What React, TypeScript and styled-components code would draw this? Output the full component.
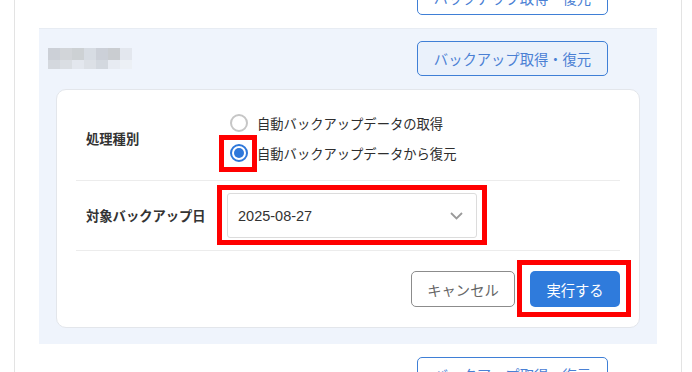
import React, { ReactElement } from 'react'
import styled, { createGlobalStyle } from 'styled-components'

const GlobalStyle = createGlobalStyle`
  html, body {
    margin: 0;
    padding: 0;
    overflow: hidden;
    background: #ffffff;
  }
  body {
    font-family: 'Liberation Sans', 'Noto Sans CJK JP', sans-serif;
    color: #333333;
    -webkit-font-smoothing: antialiased;
  }
`

const Panel = styled.div`
  margin: -33px 0 0 14px;
  width: 668px;
  box-sizing: border-box;
  border-left: 1px solid #e3e3e3;
  border-right: 1px solid #e3e3e3;
  padding: 0 24px;
  min-height: 420px;
`

const Item = styled.section<{ $active?: boolean }>`
  background: ${(p) => (p.$active ? '#eff4fc' : '#ffffff')};
  border-top: 1px solid ${(p) => (p.$active ? '#e7ecf3' : 'transparent')};
  padding: 12px 0 ${(p) => (p.$active ? '16px' : '13px')};
`

const ItemHeader = styled.div`
  display: flex;
  align-items: center;
  justify-content: space-between;
  padding: 0 49px 0 9px;
  height: 35px;
`

const Mosaic = styled.div`
  display: grid;
  grid-template-columns: repeat(7, 12px);
  grid-template-rows: 12px 9px;
`

const Cell = styled.span<{ $c: string }>`
  background: ${(p) => p.$c};
`

const OutlineButton = styled.button<{ $tinted?: boolean }>`
  margin-left: auto;
  width: 191px;
  height: 35px;
  box-sizing: border-box;
  border: 1px solid #3f7fd6;
  border-radius: 5px;
  background: ${(p) => (p.$tinted ? '#eaf1fb' : '#ffffff')};
  color: #4a80d4;
  font-family: 'Noto Sans CJK JP', sans-serif;
  font-size: 14.3px;
  padding: 0;
`

const Card = styled.div`
  margin: 13px 17px 0;
  background: #ffffff;
  border: 1px solid #e3e6eb;
  border-radius: 10px;
  padding: 0 19px;
`

const FormRow = styled.div<{ $pad: string }>`
  display: flex;
  align-items: center;
  padding: ${(p) => p.$pad};
  padding-left: 10px;
  border-bottom: 1px solid #ececec;
`

const Label = styled.div`
  width: 141px;
  flex: none;
  font-family: 'Noto Sans CJK JP', sans-serif;
  font-size: 13.3px;
  font-weight: 700;
  color: #333333;
`

const RadioList = styled.div`
  display: flex;
  flex-direction: column;
`

const RadioOption = styled.label`
  display: flex;
  align-items: center;
  height: 30px;
  gap: 9px;
  font-family: 'Noto Sans CJK JP', sans-serif;
  font-size: 13.3px;
  color: #2e2e2e;
`

const RadioMark = styled.span<{ $checked?: boolean }>`
  position: relative;
  margin-left: 3px;
  width: 18px;
  height: 18px;
  box-sizing: border-box;
  border-radius: 50%;
  border: 2px solid ${(p) => (p.$checked ? '#2f78da' : '#c6c6c6')};
  background: #ffffff;
  display: flex;
  align-items: center;
  justify-content: center;
  flex: none;

  &::after {
    content: '';
    display: ${(p) => (p.$checked ? 'block' : 'none')};
    width: 10px;
    height: 10px;
    border-radius: 50%;
    background: #2f78da;
  }
`

const Marker = styled.span<{ $inset: string }>`
  position: absolute;
  inset: ${(p) => p.$inset};
  border: 5px solid #ff0000;
  pointer-events: none;
`

const SelectBox = styled.div`
  position: relative;
  width: 250px;
  height: 45px;
  box-sizing: border-box;
  border: 1px solid #dcdcdc;
  border-radius: 3px;
  display: flex;
  align-items: center;
  justify-content: space-between;
  padding: 0 13px 0 10px;
  font-size: 14.5px;
  color: #333333;
`

const Footer = styled.div`
  display: flex;
  justify-content: flex-end;
  gap: 15px;
  padding: 20px 0 20px;
`

const CancelButton = styled.button`
  height: 36px;
  width: 104px;
  box-sizing: border-box;
  border: 1px solid #8c8c8c;
  border-radius: 5px;
  background: #ffffff;
  color: #666666;
  font-family: 'Noto Sans CJK JP', sans-serif;
  font-size: 14.3px;
  padding: 0;
`

const ButtonWrap = styled.div`
  position: relative;
  display: flex;
`

const PrimaryButton = styled.button`
  height: 36px;
  width: 90px;
  border: none;
  border-radius: 5px;
  background: #2f7bdc;
  color: #ffffff;
  font-family: 'Noto Sans CJK JP', sans-serif;
  font-size: 14.3px;
  padding: 0;
`

const mosaic = [
  '#ccd0d7', '#d2d5d9', '#cdd1d4', '#d7dce3', '#ccd0d8', '#cacdd1', '#e3e7ee',
  '#d4d8de', '#dadee3', '#e3e7ee', '#dce0e6', '#d3d8df', '#e7ebf2', '#ecf0f5',
]

const Chevron = (): ReactElement => (
  <svg width="13" height="8" viewBox="0 0 13 8">
    <path d="M1 1 L6.5 6.5 L12 1" fill="none" stroke="#9a9a9a" strokeWidth="1.8" />
  </svg>
)

const App = (): ReactElement => (
  <>
    <GlobalStyle />
    <Panel>
      <Item>
        <ItemHeader>
          <OutlineButton>バックアップ取得・復元</OutlineButton>
        </ItemHeader>
      </Item>
      <Item $active>
        <ItemHeader>
          <Mosaic>
            {mosaic.map((c, i) => (
              <Cell key={i} $c={c} />
            ))}
          </Mosaic>
          <OutlineButton $tinted>バックアップ取得・復元</OutlineButton>
        </ItemHeader>
        <Card>
          <FormRow $pad="18px 0 12px">
            <Label>処理種別</Label>
            <RadioList>
              <RadioOption>
                <RadioMark />
                自動バックアップデータの取得
              </RadioOption>
              <RadioOption>
                <RadioMark $checked>
                  <Marker $inset="-11px -11px -12px -13px" />
                </RadioMark>
                自動バックアップデータから復元
              </RadioOption>
            </RadioList>
          </FormRow>
          <FormRow $pad="12px 0 12px">
            <Label>対象バックアップ日</Label>
            <SelectBox>
              <span>2025-08-27</span>
              <Chevron />
              <Marker $inset="-9px -11px -8px -11px" />
            </SelectBox>
          </FormRow>
          <Footer>
            <CancelButton>キャンセル</CancelButton>
            <ButtonWrap>
              <PrimaryButton>実行する</PrimaryButton>
              <Marker $inset="-11px -11px -10px -13px" />
            </ButtonWrap>
          </Footer>
        </Card>
      </Item>
      <Item>
        <ItemHeader>
          <OutlineButton>バックアップ取得・復元</OutlineButton>
        </ItemHeader>
      </Item>
    </Panel>
  </>
)

export default App
